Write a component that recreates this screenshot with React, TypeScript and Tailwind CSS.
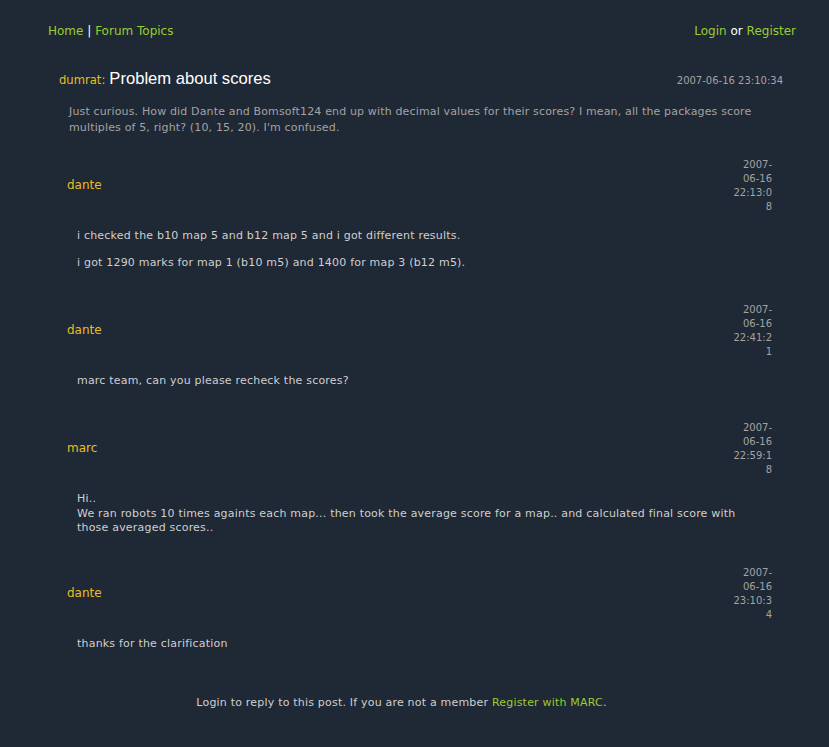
import React from "react";

type Reply = { name: string; ts: string[]; body: React.ReactNode; gap: string };

const replies: Reply[] = [
  {
    name: "dante",
    ts: ["2007-", "06-16", "22:13:0", "8"],
    gap: "mt-0",
    body: (
      <>
        <p>i checked the b10 map 5 and b12 map 5 and i got different results.</p>
        <p className="mt-[13px]">i got 1290 marks for map 1 (b10 m5) and 1400 for map 3 (b12 m5).</p>
      </>
    ),
  },
  {
    name: "dante",
    ts: ["2007-", "06-16", "22:41:2", "1"],
    gap: "mt-[33px]",
    body: <p>marc team, can you please recheck the scores?</p>,
  },
  {
    name: "marc",
    ts: ["2007-", "06-16", "22:59:1", "8"],
    gap: "mt-[33px]",
    body: (
      <p className="leading-[14.5px]">
        Hi..
        <br />
        We ran robots 10 times againts each map... then took the average score for a map.. and calculated final score with
        those averaged scores..
      </p>
    ),
  },
  {
    name: "dante",
    ts: ["2007-", "06-16", "23:10:3", "4"],
    gap: "mt-[30px]",
    body: <p>thanks for the clarification</p>,
  },
];

export default function App() {
  return (
    <div className="min-h-[747px] w-full bg-[#1f2835] font-['DejaVu_Sans',sans-serif] text-[11px] tracking-[0.2px] text-[#cfcfcf]">
      <header className="flex justify-between pl-[48px] pr-[33px] pt-[23px] text-[12px] leading-[16px] tracking-normal">
        <div>
          <a className="text-[#9acd32]">Home</a> <span className="text-white">|</span>{" "}
          <a className="text-[#9acd32]">Forum Topics</a>
        </div>
        <div>
          <a className="text-[#9acd32]">Login</a> <span className="text-white">or</span>{" "}
          <a className="text-[#9acd32]">Register</a>
        </div>
      </header>

      <div className="mt-[29px] flex items-baseline justify-between pl-[59px] pr-[46px]">
        <div className="flex items-baseline gap-[4px]">
          <span className="text-[11.6px] tracking-normal text-[#e6bf1e]">dumrat:</span>
          <span className="font-['Liberation_Sans',sans-serif] text-[16.6px] leading-[22px] tracking-normal text-white">
            Problem about scores
          </span>
        </div>
        <span className="text-[10px] tracking-normal text-[#a3a3a3]">2007-06-16 23:10:34</span>
      </div>

      <p className="mt-[14px] pl-[69px] pr-[50px] leading-[16px] tracking-[0.15px] text-[#a3a3a3]">
        Just curious. How did Dante and Bomsoft124 end up with decimal values for their scores? I mean, all the packages score
        multiples of 5, right? (10, 15, 20). I'm confused.
      </p>

      <div className="mt-[22px] flex flex-col">
        {replies.map((r, i) => (
          <div key={i} className={r.gap}>
            <div className="flex items-center justify-between pl-[67px] pr-[57px]">
              <span className="mb-[2px] text-[12px] tracking-normal text-[#e6bf1e]">{r.name}</span>
              <div className="w-[45px] text-right text-[10px] leading-[14px] tracking-normal text-[#a3a3a3]">
                {r.ts.map((l, j) => (
                  <div key={j}>{l}</div>
                ))}
              </div>
            </div>
            <div className="mt-[15px] pl-[77px] pr-[80px] leading-[14px]">{r.body}</div>
          </div>
        ))}
      </div>

      <div className="mt-[45px] flex justify-center pr-[26px] leading-[14px]">
        <span>
          Login to reply to this post. If you are not a member <a className="text-[#9acd32]">Register with MARC</a>.
        </span>
      </div>
    </div>
  );
}
